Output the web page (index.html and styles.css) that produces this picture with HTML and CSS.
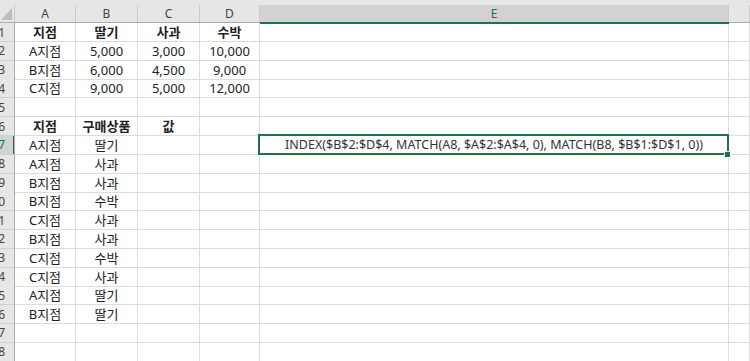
FILE: index.html
```html
<!DOCTYPE html>
<html lang="ko">
  <head>
    <meta charset="utf-8" />
    <title>Sheet1</title>
    <link rel="stylesheet" href="styles.css">
  </head>
  <body>
    <div class="sheet">
      <!-- column letters -->
      <div class="colhead">
        <div class="corner">
          <svg width="14" height="17" viewBox="0 0 14 17"><polygon points="1,15 12,15 12,3" fill="#bdbdbd"/></svg>
        </div>
        <div class="ch">A</div>
        <div class="ch">B</div>
        <div class="ch">C</div>
        <div class="ch">D</div>
        <div class="ch ch-sel">E</div>
        <div class="ch"></div>
      </div>

      <div class="row"><div class="rh"><span>1</span></div><div class="c b">지점</div><div class="c b">딸기</div><div class="c b">사과</div><div class="c b">수박</div><div class="c"></div><div class="c"></div></div>
      <div class="row"><div class="rh"><span>2</span></div><div class="c">A지점</div><div class="c">5,000</div><div class="c">3,000</div><div class="c">10,000</div><div class="c"></div><div class="c"></div></div>
      <div class="row"><div class="rh"><span>3</span></div><div class="c">B지점</div><div class="c">6,000</div><div class="c">4,500</div><div class="c">9,000</div><div class="c"></div><div class="c"></div></div>
      <div class="row"><div class="rh"><span>4</span></div><div class="c">C지점</div><div class="c">9,000</div><div class="c">5,000</div><div class="c">12,000</div><div class="c"></div><div class="c"></div></div>
      <div class="row"><div class="rh"><span>5</span></div><div class="c"></div><div class="c"></div><div class="c"></div><div class="c"></div><div class="c"></div><div class="c"></div></div>
      <div class="row"><div class="rh"><span>6</span></div><div class="c b">지점</div><div class="c b">구매상품</div><div class="c b">값</div><div class="c"></div><div class="c"></div><div class="c"></div></div>
      <div class="row"><div class="rh rh-sel"><span>7</span></div><div class="c">A지점</div><div class="c">딸기</div><div class="c"></div><div class="c"></div><div class="c active">INDEX($B$2:$D$4, MATCH(A8, $A$2:$A$4, 0), MATCH(B8, $B$1:$D$1, 0))</div><div class="c"></div></div>
      <div class="row"><div class="rh"><span>8</span></div><div class="c">A지점</div><div class="c">사과</div><div class="c"></div><div class="c"></div><div class="c"></div><div class="c"></div></div>
      <div class="row"><div class="rh"><span>9</span></div><div class="c">B지점</div><div class="c">사과</div><div class="c"></div><div class="c"></div><div class="c"></div><div class="c"></div></div>
      <div class="row"><div class="rh"><span>10</span></div><div class="c">B지점</div><div class="c">수박</div><div class="c"></div><div class="c"></div><div class="c"></div><div class="c"></div></div>
      <div class="row"><div class="rh"><span>11</span></div><div class="c">C지점</div><div class="c">사과</div><div class="c"></div><div class="c"></div><div class="c"></div><div class="c"></div></div>
      <div class="row"><div class="rh"><span>12</span></div><div class="c">B지점</div><div class="c">사과</div><div class="c"></div><div class="c"></div><div class="c"></div><div class="c"></div></div>
      <div class="row"><div class="rh"><span>13</span></div><div class="c">C지점</div><div class="c">수박</div><div class="c"></div><div class="c"></div><div class="c"></div><div class="c"></div></div>
      <div class="row"><div class="rh"><span>14</span></div><div class="c">C지점</div><div class="c">사과</div><div class="c"></div><div class="c"></div><div class="c"></div><div class="c"></div></div>
      <div class="row"><div class="rh"><span>15</span></div><div class="c">A지점</div><div class="c">딸기</div><div class="c"></div><div class="c"></div><div class="c"></div><div class="c"></div></div>
      <div class="row"><div class="rh"><span>16</span></div><div class="c">B지점</div><div class="c">딸기</div><div class="c"></div><div class="c"></div><div class="c"></div><div class="c"></div></div>
      <div class="row"><div class="rh"><span>17</span></div><div class="c"></div><div class="c"></div><div class="c"></div><div class="c"></div><div class="c"></div><div class="c"></div></div>
      <div class="row"><div class="rh"><span>18</span></div><div class="c"></div><div class="c"></div><div class="c"></div><div class="c"></div><div class="c"></div><div class="c"></div></div>
    </div>
  </body>
</html>
```

FILE: styles.css
```css
body{
  margin: 0;
  background: #fff;
  font-family: "Noto Sans", "Noto Sans CJK KR", sans-serif;
  overflow: hidden;
}

.sheet{
  width: 750px;
  height: 361px;
  overflow: hidden;
}

/* same column widths for header and rows */
.colhead, .row{
  display: grid;
  grid-template-columns: 15px 61px 62px 62px 60px 469px 1fr;
}

.colhead{
  background: #e6e6e6;
  padding-top: 5px;
  border-bottom: 1px solid #ababab;
}

.corner{
  height: 17px;
  border-right: 1px solid #c8c8c8;
}
.corner svg{
  display: block;
}

.ch{
  height: 17px;
  line-height: 17px;
  text-align: center;
  font-size: 12px;
  color: #444;
  border-right: 1px solid #cbcbcb;
  position: relative;
}

.ch-sel{
  background: #d2d2d2;
  color: #217346;
}
.ch-sel::after{
  content: "";
  position: absolute;
  left: 0;
  right: -1px;
  bottom: -2px;
  height: 2px;
  background: #217346;
}

.row{
  height: 18.82px;
}

/* row numbers: the sheet is cropped, so only the right part shows */
.rh{
  display: flex;
  justify-content: flex-end;
  align-items: center;
  overflow: hidden;
  background: #e6e6e6;
  border-right: 1px solid #ababab;
  border-bottom: 1px solid #d0d0d0;
  font-size: 12px;
  color: #444;
  position: relative;
}
.rh span{
  padding-right: 9px;
  white-space: nowrap;
}

.rh-sel{
  background: #d2d2d2;
  color: #217346;
}
.rh-sel::after{
  content: "";
  position: absolute;
  top: 0;
  bottom: -1px;
  right: -1px;
  width: 2px;
  background: #217346;
}

.c{
  border-right: 1px solid #dcdcdc;
  border-bottom: 1px solid #dcdcdc;
  text-align: center;
  font-size: 13px;
  line-height: 18px;
  color: #222;
  white-space: nowrap;
}

.b{
  font-weight: bold;
}

/* selected cell E7 */
.active{
  position: relative;
  color: #333;
  font-size: 12.5px;
}
.active::after{
  content: "";
  position: absolute;
  top: -2px;
  left: -2px;
  right: -1px;
  bottom: -1px;
  border: 2px solid #217346;
}
.active::before{
  content: "";
  position: absolute;
  right: -3px;
  bottom: -4px;
  width: 5px;
  height: 5px;
  background: #217346;
  border: 1px solid #fff;
  z-index: 1;
}
```
